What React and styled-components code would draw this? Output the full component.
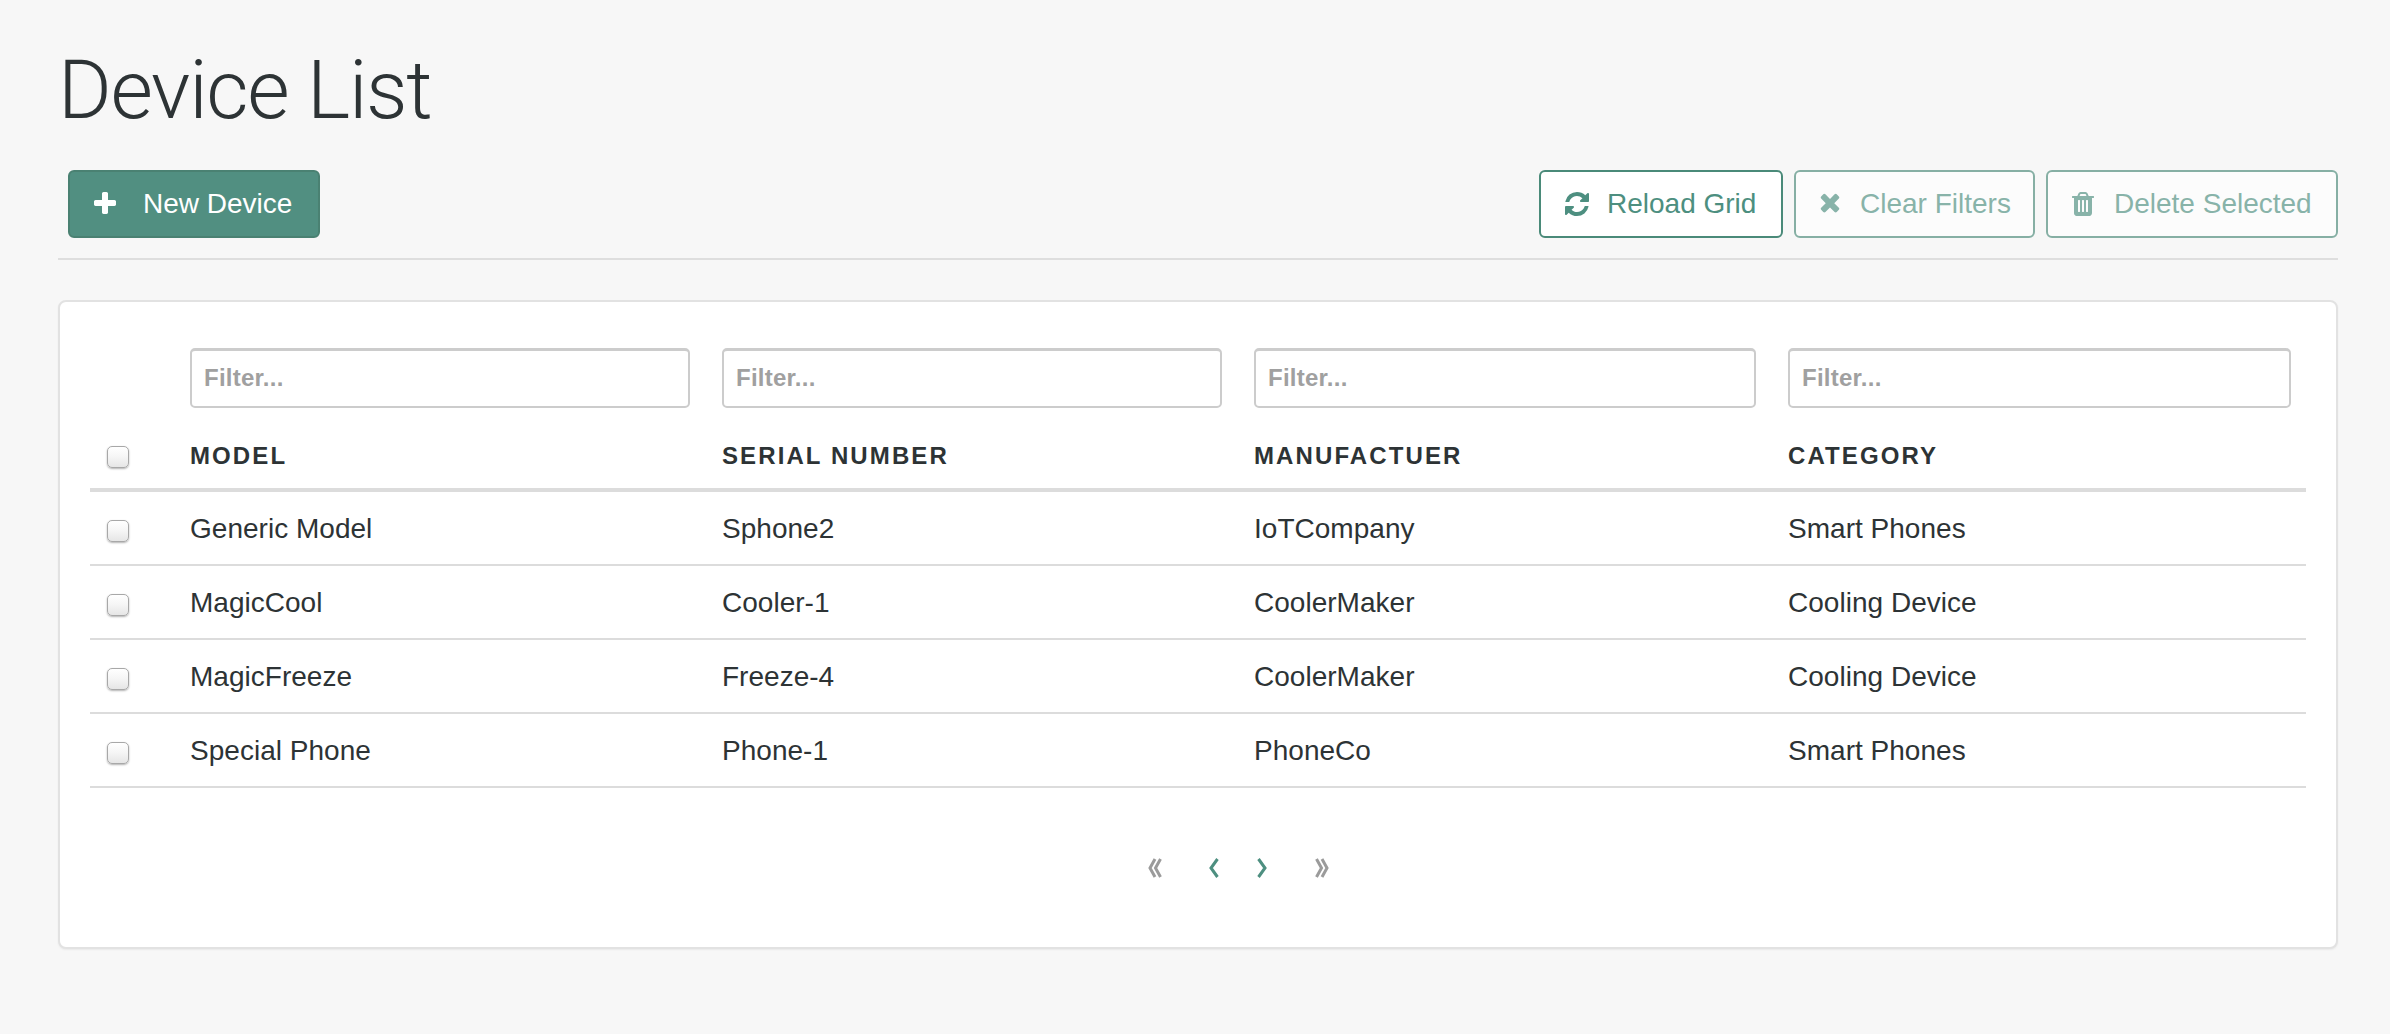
import React from 'react';
import styled, { createGlobalStyle } from 'styled-components';

const Global = createGlobalStyle`
  html, body { margin: 0; padding: 0; background: #f7f7f7; }
  body { font-family: "Liberation Sans", Arial, sans-serif; color: #2d3335; }
  * { box-sizing: border-box; }
`;

const Page = styled.div`
  padding: 0 52px 0 58px;
  height: 1034px;
  overflow: hidden;
`;
const Title = styled.h1`
  margin: 0;
  padding: 44px 0 0 0;
  height: 170px;
  font-family: Roboto, "Liberation Sans", sans-serif;
  font-weight: 300;
  font-size: 82px;
  line-height: 92px;
  letter-spacing: -1.3px;
  color: #2d3335;
`;
const Toolbar = styled.div`
  display: flex;
  justify-content: space-between;
  padding: 0 0 20px 10px;
  border-bottom: 2px solid #dedede;
  height: 90px;
`;
const Group = styled.div`
  display: flex;
  gap: 11px;
`;
const Button = styled.button`
  display: flex;
  align-items: center;
  height: 68px;
  width: ${p => p.$w}px;
  padding: 0 0 0 ${p => p.$pad}px;
  gap: ${p => p.$gap}px;
  border-radius: 6px;
  font-family: "Liberation Sans", Arial, sans-serif;
  font-size: 28px;
  letter-spacing: 0;
  white-space: nowrap;
  border: 2px solid ${p => (p.$primary ? '#4a8172' : '#4a8a79')};
  background: ${p => (p.$primary ? '#518f81' : '#fff')};
  color: ${p => (p.$primary ? '#fff' : '#4d8f80')};
  opacity: ${p => (p.$disabled ? 0.65 : 1)};
`;
const Icon = styled.svg`
  width: ${p => p.$size}px;
  height: ${p => p.$size}px;
  fill: currentColor;
  flex: none;
`;
const Card = styled.div`
  margin-top: 40px;
  height: 649px;
  background: #fff;
  border: 2px solid #e2e2e2;
  border-radius: 8px;
  padding: 46px 30px 0 30px;
  box-shadow: 0 1px 2px rgba(0, 0, 0, 0.06);
`;
const Grid = styled.div`
  display: grid;
  grid-template-columns: 100px 532px 532px 534px 1fr;
  align-items: center;
  height: ${p => p.$h}px;
  padding-top: ${p => p.$top || 0}px;
  border-bottom: ${p => p.$line || 0}px solid #dcdcdc;
`;
const FilterCell = styled.div`
  padding-right: ${p => p.$pr}px;
`;
const FilterInput = styled.input`
  display: block;
  width: 100%;
  height: 60px;
  padding: 0 12px 2px;
  border: 2px solid #ccc;
  border-top-width: 3px;
  border-radius: 5px;
  font-family: "Liberation Sans", Arial, sans-serif;
  font-size: 24px;
  font-weight: 700;
  letter-spacing: 0.25px;
  background: #fff;
  outline: none;
  &::placeholder { color: #a0a0a0; opacity: 1; }
`;
const CheckCell = styled.div`
  padding-left: 17px;
  display: flex;
  align-items: center;
`;
const Check = styled.input.attrs({ type: 'checkbox' })`
  appearance: none;
  display: block;
  margin: ${p => p.$offset || 0}px 0 0;
  width: 22px;
  height: 22px;
  border: 1px solid #a8a8a8;
  border-radius: 5px;
  background: linear-gradient(#fff 0%, #f6f6f6 45%, #e6e6e6 100%);
  box-shadow: 0 1px 2px rgba(0, 0, 0, 0.3);
`;
const Head = styled.div`
  font-size: 24px;
  font-weight: 700;
  letter-spacing: 2.1px;
  color: #2d3335;
`;
const Cell = styled.div`
  font-size: 28px;
  letter-spacing: 0.02px;
  color: #2d3335;
  padding-top: 2px;
`;
const Pager = styled.div`
  display: flex;
  justify-content: center;
  align-items: center;
  margin-top: 70px;
  padding-left: 80px;
`;
const Chevron = styled.svg`
  width: ${p => p.$w}px;
  height: 20px;
  margin-left: ${p => p.$ml}px;
  fill: none;
  stroke: ${p => (p.$active ? '#4d8f80' : '#9b9b9b')};
  stroke-width: 3;
`;

const PLUS = 'M1600 736v192q0 40-28 68t-68 28h-416v416q0 40-28 68t-68 28h-192q-40 0-68-28t-28-68v-416h-416q-40 0-68-28t-28-68v-192q0-40 28-68t68-28h416v-416q0-40 28-68t68-28h192q40 0 68 28t28 68v416h416q40 0 68 28t28 68z';
const REFRESH = 'M1639 1056q0 5-1 7-64 268-268 434.5t-478 166.5q-146 0-282.5-55t-243.5-157l-129 129q-19 19-45 19t-45-19-19-45v-448q0-26 19-45t45-19h448q26 0 45 19t19 45-19 45l-137 137q71 66 161 102t187 36q134 0 250-65t186-179q11-17 53-117 8-23 30-23h192q13 0 22.5 9.5t9.5 22.5zm25-800v448q0 26-19 45t-45 19h-448q-26 0-45-19t-19-45 19-45l138-138q-148-137-349-137-134 0-250 65t-186 179q-11 17-53 117-8 23-30 23h-199q-13 0-22.5-9.5t-9.5-22.5v-7q65-268 270-434.5t480-166.5q146 0 284 55.5t245 156.5l130-129q19-19 45-19t45 19 19 45z';
const TIMES = 'M1298 1202q0 40-28 68l-136 136q-28 28-68 28t-68-28l-294-294-294 294q-28 28-68 28t-68-28l-136-136q-28-28-28-68t28-68l294-294-294-294q-28-28-28-68t28-68l136-136q28-28 68-28t68 28l294 294 294-294q28-28 68-28t68 28l136 136q28 28 28 68t-28 68l-294 294 294 294q28 28 28 68z';
const TRASH = 'M704 1376v-704q0-14-9-23t-23-9h-64q-14 0-23 9t-9 23v704q0 14 9 23t23 9h64q14 0 23-9t9-23zm256 0v-704q0-14-9-23t-23-9h-64q-14 0-23 9t-9 23v704q0 14 9 23t23 9h64q14 0 23-9t9-23zm256 0v-704q0-14-9-23t-23-9h-64q-14 0-23 9t-9 23v704q0 14 9 23t23 9h64q14 0 23-9t9-23zm-544-992h448l-48-117q-7-9-17-11h-317q-10 2-17 11zm928 32v64q0 14-9 23t-23 9h-96v948q0 83-47 143.5t-113 60.5h-832q-66 0-113-58.5t-47-141.5v-952h-96q-14 0-23-9t-9-23v-64q0-14 9-23t23-9h309l70-167q15-37 54-63t79-26h320q40 0 79 26t54 63l70 167h309q14 0 23 9t9 23z';

const Fa = ({ d, size = 28 }) => (
  <Icon viewBox="0 0 1792 1792" $size={size}><path d={d} /></Icon>
);

const rows = [
  ['Generic Model', 'Sphone2', 'IoTCompany', 'Smart Phones'],
  ['MagicCool', 'Cooler-1', 'CoolerMaker', 'Cooling Device'],
  ['MagicFreeze', 'Freeze-4', 'CoolerMaker', 'Cooling Device'],
  ['Special Phone', 'Phone-1', 'PhoneCo', 'Smart Phones'],
];
const headers = ['MODEL', 'SERIAL NUMBER', 'MANUFACTUER', 'CATEGORY'];
const filterPad = [32, 32, 32, 15];

export default function App() {
  return (
    <Page>
      <Global />
      <Title>Device List</Title>
      <Toolbar>
        <Group>
          <Button $primary $w={252} $pad={21} $gap={24}><Fa d={PLUS} />New Device</Button>
        </Group>
        <Group>
          <Button $w={244} $pad={22} $gap={16}><Fa d={REFRESH} />Reload Grid</Button>
          <Button $w={241} $pad={23} $gap={13} $disabled><Fa d={TIMES} />Clear Filters</Button>
          <Button $w={292} $pad={21} $gap={17} $disabled><Fa d={TRASH} />Delete Selected</Button>
        </Group>
      </Toolbar>
      <Card>
        <Grid $h={60}>
          <div />
          {filterPad.map((pr, i) => (
            <FilterCell key={i} $pr={pr}><FilterInput placeholder="Filter..." readOnly /></FilterCell>
          ))}
        </Grid>
        <Grid $h={84} $line={4} $top={16}>
          <CheckCell><Check $offset={1} /></CheckCell>
          {headers.map(h => <Head key={h}>{h}</Head>)}
        </Grid>
        {rows.map(r => (
          <Grid key={r[0]} $h={74} $line={2}>
            <CheckCell><Check $offset={6} /></CheckCell>
            {r.map((c, i) => <Cell key={i}>{c}</Cell>)}
          </Grid>
        ))}
        <Pager>
          <Chevron viewBox="0 0 14 20" $w={14} $ml={0}><path d="M7 1L2 10l5 9M12.5 1l-5 9 5 9" /></Chevron>
          <Chevron viewBox="0 0 10 20" $w={10} $ml={47} $active><path d="M8.5 1L2 10l6.5 9" /></Chevron>
          <Chevron viewBox="0 0 10 20" $w={10} $ml={38} $active><path d="M1.5 1L8 10l-6.5 9" /></Chevron>
          <Chevron viewBox="0 0 14 20" $w={14} $ml={48}><path d="M1.5 1l5 9-5 9M7 1l5 9-5 9" /></Chevron>
        </Pager>
      </Card>
    </Page>
  );
}
